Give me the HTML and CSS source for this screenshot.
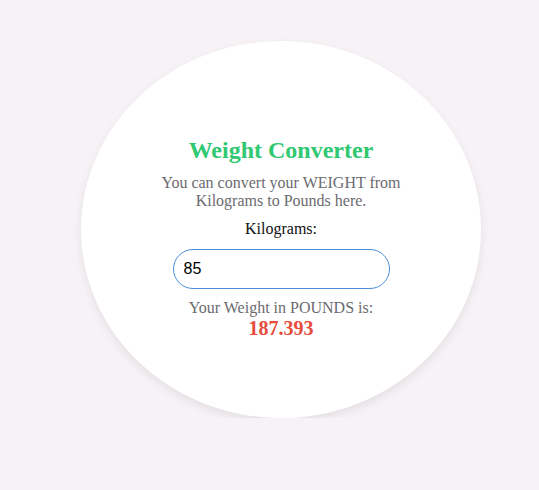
FILE: index.html
```html
<!DOCTYPE html>
<html lang="en">
<head>
<meta charset="utf-8">
<title>Weight Converter</title>
<link rel="stylesheet" href="styles.css">
</head>
<body>
<div class="page">
  <div class="card">
    <h2 class="title">Weight Converter</h2>
    <p class="intro">You can convert your WEIGHT from Kilograms to Pounds here.</p>
    <label class="label" for="kg">Kilograms:</label>
    <input class="field" id="kg" type="text" value="85" autofocus>
    <p class="result">Your Weight in POUNDS is:<span class="value">187.393</span></p>
  </div>
</div>
<script src="script.js"></script>
</body>
</html>
```
FILE: styles.css
```css
html, body {
  margin: 0;
  padding: 0;
  background: #f6f2f6;
}
.page {
  padding: 41px 0 0 81px;
  font-family: "Liberation Serif", "Times New Roman", serif;
}
.card {
  width: 400px;
  height: 377px;
  border-radius: 50%;
  background: #fff;
  box-shadow: 0 4px 10px rgba(0, 0, 0, 0.08);
  display: flex;
  flex-direction: column;
  align-items: center;
  justify-content: flex-start;
  box-sizing: border-box;
  padding-top: 95px;
  text-align: center;
}
.title {
  margin: 0;
  font-size: 24px;
  line-height: 28px;
  font-weight: bold;
  color: #31c872;
}
.intro {
  width: 250px;
  margin: 10px 0 0;
  font-size: 16px;
  line-height: 18px;
  color: #6b6b70;
}
.label {
  margin-top: 10px;
  font-size: 16px;
  line-height: 18px;
  color: #111;
}
.field {
  margin-top: 11px;
  width: 217px;
  height: 40px;
  box-sizing: border-box;
  border: 1px solid #4a90d9;
  border-radius: 20px;
  padding: 0 10px;
  font-family: "Liberation Sans", Arial, sans-serif;
  font-size: 16px;
  color: #000;
  outline: none;
  background: #fff;
}
.result {
  margin: 10px 0 0;
  font-size: 16px;
  line-height: 18px;
  color: #6b6b70;
}
.value {
  display: block;
  font-size: 20px;
  line-height: 22px;
  font-weight: bold;
  color: #e74c3c;
}
```
FILE: script.js
```js
var f = document.getElementById('kg');
f.focus();
f.setSelectionRange(f.value.length, f.value.length);
```
